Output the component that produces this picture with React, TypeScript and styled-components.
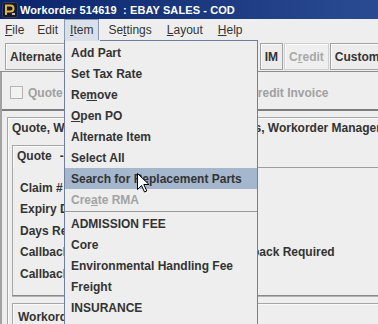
import React from "react";
import styled, { createGlobalStyle } from "styled-components";

const GlobalStyle = createGlobalStyle`
  html, body {
    margin: 0;
    padding: 0;
    background: #eeeeee;
  }
  * {
    box-sizing: border-box;
  }
`;

const Window = styled.div`
  position: relative;
  width: 378px;
  height: 324px;
  overflow: hidden;
  background: #eeeeee;
  font-family: "Liberation Sans", Arial, sans-serif;
  color: #333333;
`;

const TitleBar = styled.div`
  height: 19px;
  display: flex;
  align-items: center;
  gap: 2px;
  padding-left: 2px;
  background: linear-gradient(90deg, #0a246a 0%, #2a4b92 100%);
`;

const TitleText = styled.span`
  color: #ffffff;
  font-size: 11px;
  font-weight: bold;
  letter-spacing: 0.1px;
  white-space: pre;
`;

const MenuBar = styled.div`
  height: 21px;
  display: flex;
  gap: 1px;
  font-size: 12px;
`;

const MenuTitle = styled.div<{ $open?: boolean }>`
  display: flex;
  align-items: center;
  padding: 0 5px;
  border: 1px solid ${(p) => (p.$open ? "#8a99b6" : "transparent")};
  border-bottom: none;
  background: ${(p) => (p.$open ? "#dae0ea" : "transparent")};
  margin-left: ${(p) => (p.$open ? "-1px" : "0")};

  &:first-child {
    padding-left: 4px;
  }
  &:nth-child(n + 4) {
    margin-left: 2px;
  }
`;

const Mn = styled.span`
  text-decoration: underline;
  text-underline-offset: 1px;
`;

const ToolBar = styled.div`
  height: 32px;
  display: flex;
  align-items: flex-start;
  gap: 1px;
  padding: 3px 0 0 2px;
  border-bottom: 1px solid #8e8e8e;
  white-space: nowrap;
`;

const Grip = styled.div`
  width: 11px;
  height: 25px;
  margin-right: 2px;
  background: repeating-conic-gradient(#b2b2b2 0 25%, transparent 0 50%) 0 0 / 2px 2px;
`;

const ToolButton = styled.div<{ $disabled?: boolean }>`
  height: 27px;
  display: flex;
  align-items: center;
  padding: 0 4px;
  font-size: 12px;
  font-weight: bold;
  flex-shrink: 0;
  border: 1px solid ${(p) => (p.$disabled ? "#cfcfcf" : "#a3a3a3")};
  box-shadow: inset 1px 1px 0 #fbfbfb;
  background: ${(p) => (p.$disabled ? "#efefef" : "#ececec")};
  color: ${(p) => (p.$disabled ? "#a8a8a8" : "#333333")};
`;

const ToolSpacer = styled.div`
  width: 16px;
  flex-shrink: 0;
`;

const Body = styled.div`
  border-left: 2px solid #a2a2a2;
`;

const OptionRow = styled.div`
  height: 37px;
  display: flex;
  align-items: center;
  gap: 45px;
  padding: 4px 0 0 8px;
  white-space: nowrap;
`;

const CheckItem = styled.label<{ $disabled?: boolean }>`
  display: flex;
  align-items: center;
  gap: 5px;
  font-size: 12px;
  font-weight: bold;
  color: ${(p) => (p.$disabled ? "#a0a0a0" : "#333333")};
  flex-shrink: 0;
`;

const CheckBox = styled.span<{ $disabled?: boolean }>`
  width: 13px;
  height: 13px;
  border: 1px solid ${(p) => (p.$disabled ? "#b4b4b4" : "#8a8a8a")};
  background: ${(p) => (p.$disabled ? "#f2f2f2" : "#ffffff")};
`;

const Divider = styled.div`
  height: 2px;
  background: #7d7d7d;
  margin-right: -10px;
`;

const OuterPanel = styled.div`
  margin: 6px -60px 0 5px;
  border: 1px solid #a7a7a7;
  box-shadow: inset 1px 1px 0 #fafafa;
  height: 260px;
`;

const PanelTitle = styled.div`
  padding: 3px 0 10px 4px;
  line-height: 14px;
  font-size: 12px;
  font-weight: bold;
  white-space: nowrap;
`;

const Tabs = styled.div`
  margin-left: 4px;
  font-size: 12px;
  font-weight: bold;
  white-space: nowrap;
`;

const TabStrip = styled.div`
  display: flex;
  border-bottom: 1px solid #9e9e9e;
`;

const Tab = styled.div<{ $selected?: boolean }>`
  height: 23px;
  margin-bottom: -1px;
  display: flex;
  gap: 8px;
  padding: 3px 4px 0;
  line-height: 14px;
  border: 1px solid #a7a7a7;
  border-bottom: none;
  box-shadow: inset 1px 1px 0 #fafafa;
  background: ${(p) => (p.$selected ? "#eeeeee" : "#e4e4e4")};
`;

const TabNote = styled.span`
  color: #333333;
`;

const TabPanel = styled.div`
  border: 1px solid #a7a7a7;
  border-top: none;
  border-bottom-color: #8a8a8a;
  box-shadow: 0 1px 0 #b4b4b4;
`;

const FieldGrid = styled.div`
  display: grid;
  grid-template-columns: 199px 1fr;
  grid-template-rows: repeat(5, 21.5px);
  padding: 9px 0 10px;
`;

const Label = styled.div`
  display: flex;
  align-items: center;
  padding-left: 7px;
`;

const Cell = styled.div`
  display: flex;
  align-items: center;
`;

const WorkorderPanel = styled.div`
  margin: 7px 0 0 4px;
  border: 1px solid #a7a7a7;
  box-shadow: inset 1px 1px 0 #fafafa;
  padding: 6px 0 0 5px;
  line-height: 14px;
  height: 40px;
  font-size: 12px;
  font-weight: bold;
`;

const Popup = styled.div`
  position: absolute;
  left: 64px;
  top: 40px;
  bottom: -10px;
  width: 194px;
  padding-top: 1px;
  border: 1px solid #6f7fa3;
  background: #eeeeee;
  z-index: 10;
  font-size: 12px;
  font-weight: bold;

  &::before {
    content: "";
    position: absolute;
    top: -1px;
    left: 0;
    width: 35px;
    height: 1px;
    background: #dae0ea;
  }
`;

const PopupItem = styled.div<{ $active?: boolean; $disabled?: boolean }>`
  height: 21px;
  display: flex;
  align-items: center;
  padding-left: 6px;
  white-space: nowrap;
  background: ${(p) => (p.$active ? "#a4b7cd" : "transparent")};
  color: ${(p) => (p.$disabled ? "#a3a3a3" : "#333333")};
`;

const PopupSep = styled.div`
  height: 3px;
  padding-top: 1px;

  &::after {
    content: "";
    display: block;
    height: 1px;
    background: #9c9c9c;
  }
`;

const Pointer = styled.svg`
  position: absolute;
  left: 137px;
  top: 173px;
  z-index: 20;
`;

function AppIcon() {
  return (
    <svg width="16" height="16" viewBox="0 0 16 16">
      <rect x="0.5" y="0.5" width="15" height="15" rx="2" fill="#16162c" stroke="#3a3a5a" />
      <path d="M4 13 V3.5 H8.5 A3 3 0 0 1 8.5 9.5 H4" fill="none" stroke="#d9b545" strokeWidth="2" />
      <path d="M10 12 h3" stroke="#f4f4f4" strokeWidth="1.5" />
    </svg>
  );
}

export default function App() {
  return (
    <>
      <GlobalStyle />
      <Window>
        <TitleBar>
          <AppIcon />
          <TitleText>Workorder 514619  : EBAY SALES - COD</TitleText>
        </TitleBar>

        <MenuBar>
          <MenuTitle><Mn>F</Mn>ile</MenuTitle>
          <MenuTitle>Edit</MenuTitle>
          <MenuTitle $open><Mn>I</Mn>tem</MenuTitle>
          <MenuTitle>Se<Mn>t</Mn>tings</MenuTitle>
          <MenuTitle><Mn>L</Mn>ayout</MenuTitle>
          <MenuTitle><Mn>H</Mn>elp</MenuTitle>
        </MenuBar>

        <ToolBar>
          <Grip />
          <ToolButton>Alternate Item</ToolButton>
          <ToolButton>Open PO</ToolButton>
          <ToolButton>Search Parts</ToolButton>
          <ToolSpacer />
          <ToolButton>IM</ToolButton>
          <ToolButton $disabled>C<Mn>r</Mn>edit</ToolButton>
          <ToolButton>Customer...</ToolButton>
        </ToolBar>

        <Body>
          <OptionRow>
            <CheckItem $disabled><CheckBox $disabled />Quote</CheckItem>
            <CheckItem $disabled><CheckBox $disabled />Workorder</CheckItem>
            <CheckItem $disabled><CheckBox $disabled />Credit Invoice</CheckItem>
          </OptionRow>
          <Divider />

          <OuterPanel>
            <PanelTitle>Quote, Workorder Item Details, Labor Notes, Workorder Management</PanelTitle>
            <Tabs>
              <TabStrip>
                <Tab $selected>Quote<TabNote>- Details</TabNote></Tab>
              </TabStrip>
              <TabPanel>
                <FieldGrid>
                  <Label>Claim #</Label>
                  <Cell />
                  <Label>Expiry Date</Label>
                  <Cell />
                  <Label>Days Remaining</Label>
                  <Cell />
                  <Label>Callback Date</Label>
                  <Cell>
                    <CheckItem><CheckBox />Callback Required</CheckItem>
                  </Cell>
                  <Label>Callback Notes</Label>
                  <Cell />
                </FieldGrid>
              </TabPanel>
            </Tabs>
            <WorkorderPanel>Workorder Details</WorkorderPanel>
          </OuterPanel>
        </Body>

        <Popup>
          <PopupItem>Add Part</PopupItem>
          <PopupItem>Set Tax Rate</PopupItem>
          <PopupItem>Re<Mn>m</Mn>ove</PopupItem>
          <PopupItem><Mn>O</Mn>pen PO</PopupItem>
          <PopupItem>Alternate Item</PopupItem>
          <PopupItem>Select All</PopupItem>
          <PopupItem $active>Search for Replacement Parts</PopupItem>
          <PopupItem $disabled>Cre<Mn>a</Mn>te RMA</PopupItem>
          <PopupSep />
          <PopupItem>ADMISSION FEE</PopupItem>
          <PopupItem>Core</PopupItem>
          <PopupItem>Environmental Handling Fee</PopupItem>
          <PopupItem>Freight</PopupItem>
          <PopupItem>INSURANCE</PopupItem>
        </Popup>

        <Pointer width="13" height="20" viewBox="0 0 13 20">
          <path
            d="M0.5 0.5 V16.5 L4.5 12.5 L7.5 19 L9.8 18 L6.8 11.5 H12 Z"
            fill="#ffffff"
            stroke="#000000"
            strokeWidth="1"
            strokeLinejoin="miter"
          />
        </Pointer>
      </Window>
    </>
  );
}
